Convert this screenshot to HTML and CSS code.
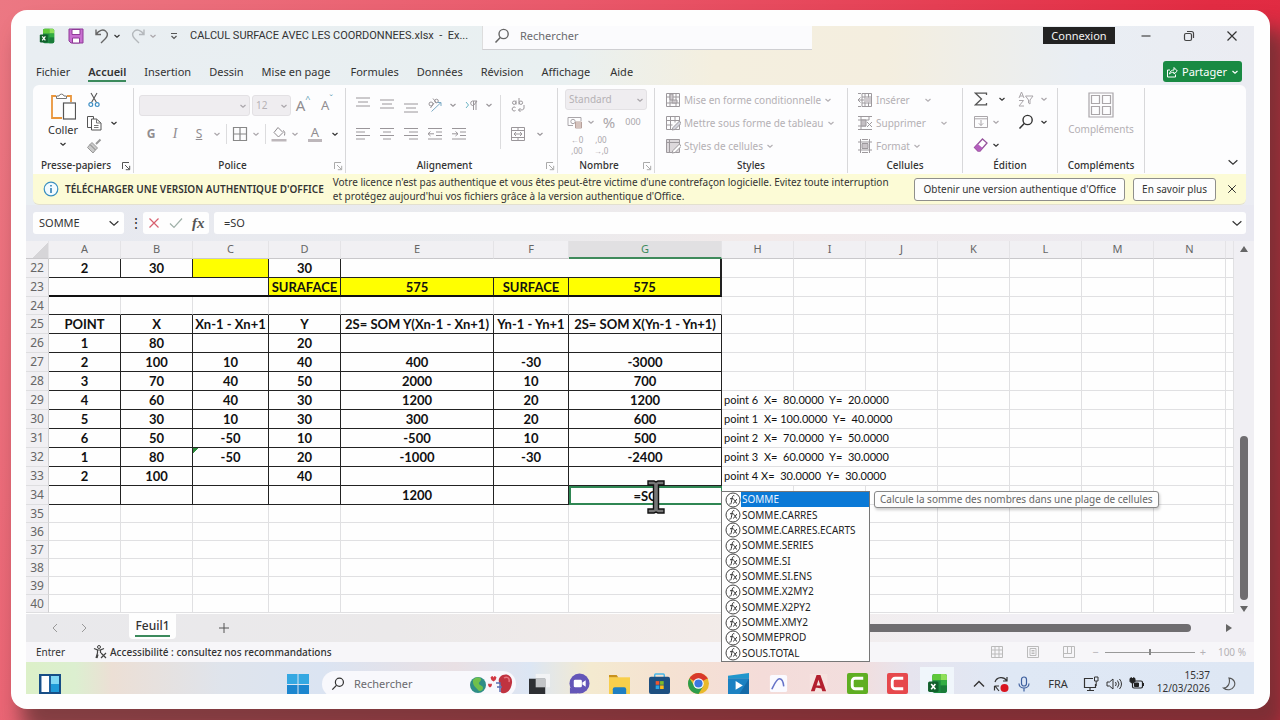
FILE: index.html
```html
<!DOCTYPE html>
<html lang="fr">
<head>
<meta charset="utf-8">
<title>CALCUL SURFACE AVEC LES COORDONNEES.xlsx</title>
<link rel="stylesheet" href="styles.css">
</head>
<body>
<svg class="sprite" aria-hidden="true">
  <symbol id="chev" viewBox="0 0 8 8"><path d="M1.5 3 4 5.3 6.5 3" fill="none" stroke="currentColor" stroke-width="1.2" vector-effect="non-scaling-stroke"/></symbol>
  <symbol id="search" viewBox="0 0 16 16"><circle cx="9.6" cy="6" r="4.6" fill="none" stroke="currentColor" stroke-width="1.4"/><path d="M6.2 9.6 1.5 14.4" stroke="currentColor" stroke-width="1.5"/></symbol>
  <symbol id="close" viewBox="0 0 12 12"><path d="M1.5 1.5l9 9M10.5 1.5l-9 9" stroke="currentColor" stroke-width="1.2"/></symbol>
  <symbol id="launch" viewBox="0 0 10 10"><path d="M1.5 8V1.5H8M4 4l4.5 4.5M8.7 4.8v3.9H4.8" fill="none" stroke="currentColor"/></symbol>
  <symbol id="excel" viewBox="0 0 20 20"><rect x="5" y="1" width="14" height="18" rx="2" fill="#1d8a41"/><path d="M7 1h6v6H5V3a2 2 0 0 1 2-2z" fill="#5fc83a"/><path d="M13 1h4a2 2 0 0 1 2 2v4h-6z" fill="#8fe05a"/><path d="M13 7h6v5h-6z" fill="#32ad43"/><path d="M13 12h6v5a2 2 0 0 1-2 2h-4z" fill="#197c38"/><rect x="1" y="8" width="10" height="10" rx="1.5" fill="#11602c"/><path d="M4 10.5l4 5M8 10.5l-4 5" stroke="#fff" stroke-width="1.5"/></symbol>
  <symbol id="paste" viewBox="0 0 26 28"><path d="M6 4H2v22h10M17 4h4v6" fill="none" stroke="#e9963c" stroke-width="1.8"/><path d="M6.5 6.5V4H9a2.6 2.6 0 0 1 5 0h2.500v2.500z" fill="#fff" stroke="#777"/><rect x="13.500" y="11" width="12" height="16" fill="#fff" stroke="#555" stroke-width="1.2"/></symbol>
  <symbol id="cut" viewBox="0 0 12 16"><path d="M3 1l5.500 9.500M9 1 3.500 10.500" stroke="#555" fill="none" stroke-width="1.1"/><circle cx="2.800" cy="12.600" r="1.900" fill="none" stroke="#3f8fc4" stroke-width="1.2"/><circle cx="9.200" cy="12.600" r="1.900" fill="none" stroke="#3f8fc4" stroke-width="1.2"/></symbol>
  <symbol id="copy" viewBox="0 0 16 16"><path d="M5 12.500H1.500v-11h6V4" fill="none" stroke="#555"/><path d="M5.500 4h5L15 8v7H5.500z" fill="#fff" stroke="#555"/><path d="M10.500 4v4H15M8 10.500h4.500M8 12.500h4.500" fill="none" stroke="#777"/></symbol>
  <symbol id="brush" viewBox="0 0 16 16"><path d="M14.500 1.500 10 6" stroke="#999" stroke-width="2"/><path d="M6 4.500 11.500 10 9.500 12 4 6.500zM4 6.500 1.500 9.500l5.500 5.500 2.500-3z" fill="#c9c9c9" stroke="#999"/></symbol>
  <symbol id="borders" viewBox="0 0 16 16"><path d="M1.500 1.500h13v13h-13zM8 1.500v13M1.500 8h13" fill="none" stroke="currentColor" stroke-width="1.200"/></symbol>
  <symbol id="bucket" viewBox="0 0 16 16"><path d="M7 1.500 12 6.500 7.500 11 3 6.500zM12 4.500c2 1 2 2 1.500 5" fill="none" stroke="#8d898d"/><path d="M.5 13h15v2.500H.5z" fill="#bdb7bb"/></symbol>
  <symbol id="al-top" viewBox="0 0 14 14"><path d="M0 2h14M2 6h10M0 10h14" stroke="currentColor"/></symbol>
  <symbol id="al-left" viewBox="0 0 14 14"><path d="M0 1.500h14M0 5h9M0 8.500h14M0 12h9" stroke="currentColor"/></symbol>
  <symbol id="al-center" viewBox="0 0 14 14"><path d="M0 1.500h14M3 5h8M0 8.500h14M3 12h8" stroke="currentColor"/></symbol>
  <symbol id="al-right" viewBox="0 0 14 14"><path d="M0 1.500h14M5 5h9M0 8.500h14M5 12h9" stroke="currentColor"/></symbol>
  <symbol id="outdent" viewBox="0 0 14 14"><path d="M0 1.500h14M8 5h6M8 8.500h6M0 12h14M0 6.800h6M2.500 4.500 0 6.800 2.500 9" fill="none" stroke="currentColor"/></symbol>
  <symbol id="indent" viewBox="0 0 14 14"><path d="M0 1.500h14M8 5h6M8 8.500h6M0 12h14M0 6.800h6M3.500 4.500 6 6.800 3.500 9" fill="none" stroke="currentColor"/></symbol>
  <symbol id="orient" viewBox="0 0 16 16"><circle cx="4" cy="7" r="2" fill="none" stroke="currentColor"/><path d="M3.500 11 7 6M6 1.500 9.500 6" stroke="currentColor"/><circle cx="9.500" cy="4" r="1.800" fill="none" stroke="currentColor"/><path d="M4.500 14.500 14 5.500M10.500 5.500H14V9" fill="none" stroke="#7aa9c4"/></symbol>
  <symbol id="para" viewBox="0 0 16 16"><path d="M3 5l2.500 3L3 11" fill="none" stroke="#6bb4c4"/><path d="M13 4v9M10.500 4v9M14 4h-4.500a2.300 2.300 0 0 0 0 4.500h1z" fill="none" stroke="currentColor"/></symbol>
  <symbol id="wrap" viewBox="0 0 16 16"><path d="M6 3.500v4M9 1v6.500M5.500 10.500A2 2 0 1 0 5.500 13.500M14 8v3c0 2-2 2-5.500 2M10.500 11l-2 2 2 2" fill="none" stroke="currentColor"/><circle cx="4.200" cy="5.700" r="1.700" fill="none" stroke="currentColor"/><circle cx="10.900" cy="5.700" r="1.700" fill="none" stroke="currentColor"/></symbol>
  <symbol id="merge" viewBox="0 0 16 16"><path d="M1.500 1.500h13v13h-13zM1.500 4.500h13M1.500 11.500h13M8 1.500v3M8 11.500v3M4 8h8M6 6 4 8l2 2M10 6l2 2-2 2" fill="none" stroke="currentColor"/></symbol>
  <symbol id="money" viewBox="0 0 16 16"><path d="M1 3.500h13V7M1 3.500v8h5" fill="none" stroke="currentColor"/><circle cx="6" cy="7.500" r="2.200" fill="none" stroke="currentColor"/><path d="M8.500 8h6v6h-6zM8.500 10h6M8.500 12h6" fill="#f4e5e0" stroke="#b7a19b"/></symbol>
  <symbol id="table1" viewBox="0 0 16 16"><path d="M1.500 1.500h13v13h-13zM1.500 5h13M1.500 11h13M5 1.500v13M11 1.500v13" fill="none" stroke="currentColor"/><path d="M5 2h3v6H5zM7 8h5v3H7z" fill="#cfcace" stroke="currentColor"/></symbol>
  <symbol id="table2" viewBox="0 0 16 16"><path d="M1.500 1.500h13v13h-13zM1.500 5.500h13M1.500 10h6M5.500 1.500v13M10 1.500v6" fill="none" stroke="currentColor"/><path d="M14.500 6 8 12.500l-1 2.500 3-.500L16 8.500z" fill="#d4d5de" stroke="currentColor"/></symbol>
  <symbol id="table3" viewBox="0 0 16 16"><path d="M1.500 1.500h13v13h-13zM1.500 4.500h13M4.500 1.500v13" fill="#ddd9dc" stroke="currentColor"/><path d="M14.500 6 8 12.500l-1 2.500 3-.500L16 8.500z" fill="#fff" stroke="currentColor"/></symbol>
  <symbol id="ins" viewBox="0 0 16 16"><path d="M5 1.500h9.500v13H5zM5 5h9.500M5 11h9.500M8 1.500v13M11.500 1.500v13M1 1.500h3M1 14.500h3" fill="none" stroke="currentColor"/><path d="M8 5.500h6v5H8z" fill="#cfcace"/><path d="M7 8H1M3.500 5.500 1 8l2.500 2.500" fill="none" stroke="currentColor"/></symbol>
  <symbol id="del" viewBox="0 0 16 16"><path d="M1 1.500h14M1 14.500h14M4 1.500V5h8V1.500M4 14.500V11h5M1 5h3M1 11h3" fill="none" stroke="currentColor"/><path d="M4 5h5v6H4z" fill="#c4bfc3" stroke="currentColor"/><path d="M10 7l5 5M15 7l-5 5" stroke="currentColor"/></symbol>
  <symbol id="fmt" viewBox="0 0 16 16"><path d="M1 4h14M1 12h14M3.500 1v14M12.500 1v14M5 1.500h6M5 14.500h6" fill="none" stroke="currentColor"/><path d="M5 5.500h6v5H5z" fill="#c9c4c8" stroke="currentColor"/></symbol>
  <symbol id="sigma" viewBox="0 0 14 14"><path d="M12.500 3V1.200H1.500L7.500 7l-6 5.800h11V11" fill="none" stroke="#555" stroke-width="1.300"/></symbol>
  <symbol id="fill" viewBox="0 0 16 16"><path d="M1.500 2.500h13v11h-13zM1.500 4.800h13M8 6v5.500M5.800 9.300 8 11.500l2.200-2.200" fill="none" stroke="currentColor"/></symbol>
  <symbol id="eraser" viewBox="0 0 16 16"><path d="M9.500 2 14 6 7 14H5L1.500 10.500z" fill="#fff" stroke="#96539c" stroke-width="1.300"/><path d="M4.800 6.900 9.600 11 7 14H5L1.500 10.500z" fill="#b55fbe"/></symbol>
  <symbol id="sort" viewBox="0 0 16 16"><path d="M1 7 3.500 1 6 7M2 5h3M1 9.500h4.500L1 15h5" fill="none" stroke="currentColor"/><path d="M7.500 5h7.500l-3 4v4l-1.500-1V9z" fill="none" stroke="currentColor"/></symbol>
  <symbol id="addins" viewBox="0 0 26 26"><path d="M1 1h24v24H1zM3.500 3.500h8v8h-8zM14.500 3.500h8v8h-8zM3.500 14.500h8v8h-8zM14.500 14.500h8v8h-8z" fill="none" stroke="#aaa6a9" stroke-width="1.200"/></symbol>
  <symbol id="fxc" viewBox="0 0 16 16"><circle cx="8" cy="8" r="7" fill="#fff" stroke="#444"/><path d="M9.300 3.800C7 2.800 7.300 6 6.300 10.500c-.300 1.700-1.300 2-2 1.500M5 6.700h3.500M8.500 7.500c2 0 1.500 4 3.500 3.700M12 7.300c-1.500.200-2 3.700-3.800 4" fill="none" stroke="#333"/></symbol>
  <symbol id="cam" viewBox="0 0 22 22"><rect width="22" height="22" rx="2" fill="currentColor"/><path d="M17 5.500H8.500a3 3 0 0 0-3 3v5a3 3 0 0 0 3 3H17" fill="none" stroke="#fff" stroke-width="3"/></symbol>
</svg>

<main class="frame">
<div class="app">
  <header class="titlebar">
    <div class="quick">
      <svg class="s16"><use href="#excel"/></svg>
      <button aria-label="Enregistrer"><svg class="s16" viewBox="0 0 16 16"><path d="M1 1h14v14H3l-2-2z" fill="#c86fd0" stroke="#8f3b98"/><path d="M4 1.500h8v5H4zM4.500 10h7v5h-7z" fill="#fff" stroke="#8f3b98"/></svg></button>
      <button aria-label="Annuler"><svg class="s16" viewBox="0 0 16 16"><path d="M2 1.500v5h5M2 6.500C5 2 9 1 11.500 3c3 2.500 2 5.500 0 7.500L7 15" fill="none" stroke="#666" stroke-width="1.400"/></svg><svg class="s8"><use href="#chev"/></svg></button>
      <button class="dim" aria-label="Rétablir"><svg class="s16" viewBox="0 0 16 16"><path d="M14 1.500v5H9M14 6.500C11 2 7 1 4.500 3c-3 2.500-2 5.500 0 7.500L9 15" fill="none" stroke="#b4b8bc" stroke-width="1.400"/></svg><svg class="s8"><use href="#chev"/></svg></button>
      <button aria-label="Personnaliser"><svg class="s8" viewBox="0 0 8 8"><path d="M1 1.500h6M1.500 4 4 6.500 6.500 4" fill="none" stroke="#555" stroke-width="1.200"/></svg></button>
    </div>
    <h1>CALCUL SURFACE AVEC LES COORDONNEES.xlsx&nbsp; -&nbsp; Ex...</h1>
    <label class="topsearch"><svg class="s16"><use href="#search"/></svg><input type="search" placeholder="Rechercher" aria-label="Rechercher"></label>
    <div class="wctl">
      <button class="connect">Connexion</button>
      <button aria-label="Réduire"><svg class="s12" viewBox="0 0 12 12"><path d="M1.500 6h9" stroke="#444" stroke-width="1.200"/></svg></button>
      <button aria-label="Restaurer"><svg class="s12" viewBox="0 0 12 12"><rect x="1.500" y="3.500" width="7" height="7" rx="1.500" fill="none" stroke="#444" stroke-width="1.200"/><path d="M4 1.500h4.500a2 2 0 0 1 2 2V8" fill="none" stroke="#444" stroke-width="1.200"/></svg></button>
      <button aria-label="Fermer"><svg class="s12"><use href="#close"/></svg></button>
    </div>
  </header>

  <nav class="tabs">
    <a href="#">Fichier</a><a href="#" class="on">Accueil</a><a href="#">Insertion</a><a href="#">Dessin</a><a href="#">Mise en page</a><a href="#">Formules</a><a href="#">Données</a><a href="#">Révision</a><a href="#">Affichage</a><a href="#">Aide</a>
    <button class="share"><svg class="s12" viewBox="0 0 12 12"><path d="M4 4H1.500v7h8V8.500M3.500 8C4 5 6 4 8 4V1.500L11.300 5 8 8V6.300C6 6.300 5 6.500 3.500 8z" fill="none" stroke="#fff"/></svg>Partager<svg class="s8"><use href="#chev"/></svg></button>
  </nav>

  <section class="ribbon">
    <div class="group g-clip">
      <div class="tools clip">
        <button class="paste"><svg width="26" height="28"><use href="#paste"/></svg>Coller<svg class="s8"><use href="#chev"/></svg></button>
        <div class="clipcol">
          <button aria-label="Couper"><svg width="12" height="16"><use href="#cut"/></svg></button>
          <button aria-label="Copier"><svg class="s16"><use href="#copy"/></svg><svg class="s8"><use href="#chev"/></svg></button>
          <button aria-label="Reproduire"><svg class="s16"><use href="#brush"/></svg></button>
        </div>
      </div>
      <footer class="launcher">Presse-papiers<svg class="s10"><use href="#launch"/></svg></footer>
    </div>
    <div class="group g-font dim">
      <div class="tools two">
        <div class="row">
          <label class="sel w-font"><select aria-label="Police" disabled><option></option></select><svg class="s8"><use href="#chev"/></svg></label>
          <label class="sel w-size"><select aria-label="Taille" disabled><option>12</option></select><svg class="s8"><use href="#chev"/></svg></label>
          <button class="b big">A<sup>^</sup></button><button class="b mid">A<sup>ˇ</sup></button>
        </div>
        <div class="row">
          <button class="b"><b>G</b></button><button class="b ital">I</button><button class="b"><u>S</u></button><button class="c"><svg class="s8"><use href="#chev"/></svg></button>
          <i class="sep"></i>
          <button class="b20"><svg class="s16 mid-grey"><use href="#borders"/></svg></button><button class="c"><svg class="s8"><use href="#chev"/></svg></button>
          <i class="sep"></i>
          <button class="b20"><svg class="s16"><use href="#bucket"/></svg></button><button class="c"><svg class="s8"><use href="#chev"/></svg></button>
          <button class="b fontcol"><span>A</span></button><button class="c dark"><svg class="s8"><use href="#chev"/></svg></button>
        </div>
      </div>
      <footer class="launcher">Police<svg class="s10"><use href="#launch"/></svg></footer>
    </div>
    <div class="group g-align dim">
      <div class="tools aligns">
        <div class="two">
          <div class="row">
            <button class="b"><svg class="s14 up"><use href="#al-top"/></svg></button><button class="b"><svg class="s14"><use href="#al-top"/></svg></button><button class="b low"><svg class="s14"><use href="#al-top"/></svg></button><button class="b"><svg class="s16"><use href="#orient"/></svg></button><button class="c"><svg class="s8"><use href="#chev"/></svg></button><button class="b"><svg class="s16"><use href="#para"/></svg></button><button class="c"><svg class="s8"><use href="#chev"/></svg></button>
          </div>
          <div class="row">
            <button class="b"><svg class="s14"><use href="#al-left"/></svg></button><button class="b"><svg class="s14"><use href="#al-center"/></svg></button><button class="b"><svg class="s14"><use href="#al-right"/></svg></button><button class="b"><svg class="s14"><use href="#outdent"/></svg></button><button class="b"><svg class="s14"><use href="#indent"/></svg></button>
          </div>
        </div>
        <i class="sep tall"></i>
        <div class="two">
          <div class="row"><button class="b"><svg class="s16"><use href="#wrap"/></svg></button></div>
          <div class="row"><button class="b"><svg class="s16"><use href="#merge"/></svg></button><button class="b20"><svg class="s8"><use href="#chev"/></svg></button></div>
        </div>
      </div>
      <footer class="launcher">Alignement<svg class="s10"><use href="#launch"/></svg></footer>
    </div>
    <div class="group g-num dim">
      <div class="tools three">
        <div class="row"><label class="sel w-num"><select aria-label="Format de nombre" disabled><option>Standard</option></select><svg class="s8"><use href="#chev"/></svg></label></div>
        <div class="row"><button class="b20"><svg class="s16"><use href="#money"/></svg></button><button class="c"><svg class="s8"><use href="#chev"/></svg></button><button class="b big">%</button><button class="b tiny">000</button></div>
        <div class="row"><button class="b dec"><span>←0</span><span>,00</span></button><button class="b dec"><span>,00</span><span>→,0</span></button></div>
      </div>
      <footer class="launcher">Nombre<svg class="s10"><use href="#launch"/></svg></footer>
    </div>
    <div class="group g-style dim">
      <div class="tools three">
        <button class="t"><svg class="s16"><use href="#table1"/></svg>Mise en forme conditionnelle<svg class="s8"><use href="#chev"/></svg></button>
        <button class="t"><svg class="s16"><use href="#table2"/></svg>Mettre sous forme de tableau<svg class="s8"><use href="#chev"/></svg></button>
        <button class="t"><svg class="s16"><use href="#table3"/></svg>Styles de cellules<svg class="s8"><use href="#chev"/></svg></button>
      </div>
      <footer>Styles</footer>
    </div>
    <div class="group g-cell dim">
      <div class="tools three">
        <button class="t split"><svg class="s16"><use href="#ins"/></svg>Insérer<svg class="s8"><use href="#chev"/></svg></button>
        <button class="t split"><svg class="s16"><use href="#del"/></svg>Supprimer<svg class="s8"><use href="#chev"/></svg></button>
        <button class="t"><svg class="s16"><use href="#fmt"/></svg>Format<svg class="s8"><use href="#chev"/></svg></button>
      </div>
      <footer>Cellules</footer>
    </div>
    <div class="group g-edit">
      <div class="tools three">
        <div class="row"><button class="b"><svg class="s14"><use href="#sigma"/></svg></button><button class="c first"><svg class="s8"><use href="#chev"/></svg></button><button class="b dim"><svg class="s16"><use href="#sort"/></svg></button><button class="c dim"><svg class="s8"><use href="#chev"/></svg></button></div>
        <div class="row"><button class="b dim"><svg class="s16"><use href="#fill"/></svg></button><button class="c second dim"><svg class="s8"><use href="#chev"/></svg></button><button class="b"><svg class="s16"><use href="#search"/></svg></button><button class="c"><svg class="s8"><use href="#chev"/></svg></button></div>
        <div class="row"><button class="b"><svg class="s16"><use href="#eraser"/></svg></button><button class="c second"><svg class="s8"><use href="#chev"/></svg></button></div>
      </div>
      <footer>Édition</footer>
    </div>
    <div class="group g-add dim">
      <div class="tools"><button class="addin"><svg width="26" height="26"><use href="#addins"/></svg>Compléments</button></div>
      <footer>Compléments</footer>
    </div>
    <button class="collapse" aria-label="Réduire le ruban"><svg class="s14" viewBox="0 0 8 8"><use href="#chev"/></svg></button>
  </section>

  <section class="notice">
    <svg class="s16" viewBox="0 0 16 16"><circle cx="8" cy="8" r="6.800" fill="#f2fbff" stroke="#3a8fc0" stroke-width="1.200"/><path d="M8 7v5M8 4v1.600" stroke="#2f7fb5" stroke-width="1.600"/></svg>
    <strong>TÉLÉCHARGER UNE VERSION AUTHENTIQUE D'OFFICE</strong>
    <p>Votre licence n'est pas authentique et vous êtes peut-être victime d'une contrefaçon logicielle. Evitez toute interruption<br>et protégez aujourd'hui vos fichiers grâce à la version authentique d'Office.</p>
    <button class="out">Obtenir une version authentique d'Office</button>
    <button class="out">En savoir plus</button>
    <button class="x" aria-label="Fermer"><svg class="s10" viewBox="0 0 12 12"><use href="#close"/></svg></button>
  </section>

  <section class="formula">
    <label class="namebox"><input value="SOMME" aria-label="Zone Nom"><svg class="s14" viewBox="0 0 8 8"><use href="#chev"/></svg></label>
    <span class="dots">⋮</span>
    <div class="fxbtns">
      <button aria-label="Annuler"><svg class="s12"><use href="#close" color="#d8606f"/></svg></button>
      <button aria-label="Entrer"><svg class="s14" viewBox="0 0 14 14"><path d="M1 7.500 5 11.500 13 2.500" fill="none" stroke="#9fb0a8" stroke-width="1.200"/></svg></button>
      <button class="fx" aria-label="Insérer une fonction">fx</button>
    </div>
    <label class="fbar"><input value="=SO" aria-label="Barre de formule"><svg class="s14" viewBox="0 0 8 8"><use href="#chev"/></svg></label>
  </section>

  <section class="sheet">
    <table>
      <colgroup><col class="k-h"><col class="k"><col class="k"><col class="k-c"><col class="k"><col class="k-e"><col class="k-f"><col class="k-g"><col class="k"><col class="k"><col class="k"><col class="k"><col class="k"><col class="k"><col class="k"><col></colgroup>
      <thead><tr><th class="corner"></th><th>A</th><th>B</th><th>C</th><th>D</th><th>E</th><th>F</th><th class="cur">G</th><th>H</th><th>I</th><th>J</th><th>K</th><th>L</th><th>M</th><th>N</th><th></th></tr></thead>
      <tbody>
        <tr class="d short"><th>22</th><td>2</td><td>30</td><td class="y"></td><td>30</td><td colspan="3" class="thick-r"></td><td></td><td></td><td></td><td></td><td></td><td></td><td></td><td></td></tr>
        <tr class="d short base"><th>23</th><td colspan="3"></td><td class="y">SURAFACE</td><td class="y">575</td><td class="y">SURFACE</td><td class="y thick-r">575</td><td></td><td></td><td></td><td></td><td></td><td></td><td></td><td></td></tr>
        <tr class="s above"><th>24</th><td></td><td></td><td></td><td></td><td></td><td></td><td></td><td></td><td></td><td></td><td></td><td></td><td></td><td></td><td></td></tr>
        <tr class="d"><th>25</th><td>POINT</td><td>X</td><td>Xn-1 - Xn+1</td><td>Y</td><td>2S= SOM Y(Xn-1 - Xn+1)</td><td>Yn-1 - Yn+1</td><td>2S= SOM X(Yn-1 - Yn+1)</td><td></td><td></td><td></td><td></td><td></td><td></td><td></td><td></td></tr>
        <tr class="d"><th>26</th><td>1</td><td>80</td><td></td><td>20</td><td></td><td></td><td></td><td></td><td></td><td></td><td></td><td></td><td></td><td></td><td></td></tr>
        <tr class="d"><th>27</th><td>2</td><td>100</td><td>10</td><td>40</td><td>400</td><td>-30</td><td>-3000</td><td></td><td></td><td></td><td></td><td></td><td></td><td></td><td></td></tr>
        <tr class="d"><th>28</th><td>3</td><td>70</td><td>40</td><td>50</td><td>2000</td><td>10</td><td>700</td><td></td><td></td><td></td><td></td><td></td><td></td><td></td><td></td></tr>
        <tr class="d"><th>29</th><td>4</td><td>60</td><td>40</td><td>30</td><td>1200</td><td>20</td><td>1200</td><td colspan="3" class="n">point 6  X=  80.0000  Y=  20.0000</td><td></td><td></td><td></td><td></td><td></td></tr>
        <tr class="d"><th>30</th><td>5</td><td>30</td><td>10</td><td>30</td><td>300</td><td>20</td><td>600</td><td colspan="3" class="n">point 1  X= 100.0000  Y=  40.0000</td><td></td><td></td><td></td><td></td><td></td></tr>
        <tr class="d"><th>31</th><td>6</td><td>50</td><td>-50</td><td>10</td><td>-500</td><td>10</td><td>500</td><td colspan="3" class="n">point 2  X=  70.0000  Y=  50.0000</td><td></td><td></td><td></td><td></td><td></td></tr>
        <tr class="d"><th>32</th><td>1</td><td>80</td><td class="flag">-50</td><td>20</td><td>-1000</td><td>-30</td><td>-2400</td><td colspan="3" class="n">point 3  X=  60.0000  Y=  30.0000</td><td></td><td></td><td></td><td></td><td></td></tr>
        <tr class="d"><th>33</th><td>2</td><td>100</td><td></td><td>40</td><td></td><td></td><td></td><td colspan="3" class="n">point 4 X=  30.0000  Y=  30.0000</td><td></td><td></td><td></td><td></td><td></td></tr>
        <tr class="d"><th>34</th><td></td><td></td><td></td><td></td><td>1200</td><td></td><td class="edit">=SO
          <svg class="ibeam" viewBox="0 0 18 34"><path d="M1 1h6l2 1 2-1h6v4h-5.500v24H17v4h-6l-2-1-2 1H1v-4h5.500V5H1z" fill="#777" stroke="#111" stroke-width="1.400"/></svg>
          <ul class="suggest">
            <li class="on"><svg class="s16"><use href="#fxc"/></svg><span>SOMME</span></li>
            <li><svg class="s16"><use href="#fxc"/></svg><span>SOMME.CARRES</span></li>
            <li><svg class="s16"><use href="#fxc"/></svg><span>SOMME.CARRES.ECARTS</span></li>
            <li><svg class="s16"><use href="#fxc"/></svg><span>SOMME.SERIES</span></li>
            <li><svg class="s16"><use href="#fxc"/></svg><span>SOMME.SI</span></li>
            <li><svg class="s16"><use href="#fxc"/></svg><span>SOMME.SI.ENS</span></li>
            <li><svg class="s16"><use href="#fxc"/></svg><span>SOMME.X2MY2</span></li>
            <li><svg class="s16"><use href="#fxc"/></svg><span>SOMME.X2PY2</span></li>
            <li><svg class="s16"><use href="#fxc"/></svg><span>SOMME.XMY2</span></li>
            <li><svg class="s16"><use href="#fxc"/></svg><span>SOMMEPROD</span></li>
            <li><svg class="s16"><use href="#fxc"/></svg><span>SOUS.TOTAL</span></li>
          </ul>
          <div class="tip" role="tooltip">Calcule la somme des nombres dans une plage de cellules</div>
        </td><td></td><td></td><td></td><td></td><td></td><td></td><td></td><td></td></tr>
        <tr class="s"><th>35</th><td></td><td></td><td></td><td></td><td></td><td></td><td></td><td></td><td></td><td></td><td></td><td></td><td></td><td></td><td></td></tr>
        <tr class="s"><th>36</th><td></td><td></td><td></td><td></td><td></td><td></td><td></td><td></td><td></td><td></td><td></td><td></td><td></td><td></td><td></td></tr>
        <tr class="s"><th>37</th><td></td><td></td><td></td><td></td><td></td><td></td><td></td><td></td><td></td><td></td><td></td><td></td><td></td><td></td><td></td></tr>
        <tr class="s"><th>38</th><td></td><td></td><td></td><td></td><td></td><td></td><td></td><td></td><td></td><td></td><td></td><td></td><td></td><td></td><td></td></tr>
        <tr class="s"><th>39</th><td></td><td></td><td></td><td></td><td></td><td></td><td></td><td></td><td></td><td></td><td></td><td></td><td></td><td></td><td></td></tr>
        <tr class="s"><th>40</th><td></td><td></td><td></td><td></td><td></td><td></td><td></td><td></td><td></td><td></td><td></td><td></td><td></td><td></td><td></td></tr>
      </tbody>
    </table>
    <div class="vscroll"><i class="tri up"></i><span></span><i class="tri down"></i></div>
  </section>

  <section class="sheettabs">
    <button class="nav" aria-label="Précédent"><svg class="s10" viewBox="0 0 10 10"><path d="M7 1 3 5l4 4" fill="none" stroke="#999"/></svg></button>
    <button class="nav" aria-label="Suivant"><svg class="s10" viewBox="0 0 10 10"><path d="M3 1l4 4-4 4" fill="none" stroke="#999"/></svg></button>
    <button class="tab"><span>Feuil1</span></button>
    <button class="plus" aria-label="Nouvelle feuille"><svg class="s10" viewBox="0 0 10 10"><path d="M5 0v10M0 5h10" stroke="#555"/></svg></button>
    <div class="hscroll"><span></span><i class="tri right"></i></div>
  </section>

  <section class="status">
    <span>Entrer</span>
    <svg class="s14" viewBox="0 0 14 14"><circle cx="6" cy="2" r="1.500" fill="none" stroke="#444"/><path d="M1 3.500 4.500 5v3L3 13M11 3.500 7.500 5v3M4.500 5h3M5 9.500 4 13" fill="none" stroke="#444" stroke-width="1.200"/><path d="M8 8l5 5M13 8l-5 5" stroke="#444" stroke-width="1.200"/></svg>
    <strong>Accessibilité : consultez nos recommandations</strong>
    <div class="views">
      <svg class="s12" viewBox="0 0 12 12"><path d="M.5.500h11v11H.5zM.5 4h11M.5 8h11M4 .500v11M8 .500v11" fill="none" stroke="#bbb"/></svg>
      <svg class="s12" viewBox="0 0 12 12"><path d="M.5.500h11v11H.5zM3 2.500h6v7H3zM4.500 4.500h3M4.500 6h3M4.500 7.500h3" fill="none" stroke="#bbb"/></svg>
      <svg class="s12" viewBox="0 0 12 12"><path d="M.5.500h11v11H.5zM.5 7.500h8v-7M4.500 .500v7" fill="none" stroke="#bbb"/></svg>
    </div>
    <span class="pale">−</span><input class="zoom" type="range" value="50" aria-label="Zoom"><span class="pale">+</span><span class="pale pct">100 %</span>
  </section>

  <footer class="taskbar">
    <svg class="widget" width="22" height="20" viewBox="0 0 22 20"><rect x="1" y="1" width="20" height="18" fill="#1f5f9c" stroke="#174e86" stroke-width="2"/><rect x="2.500" y="2" width="7.500" height="16" fill="#fff"/><rect x="12" y="2" width="8" height="16" fill="#1e9ad8"/><rect x="12" y="2" width="8" height="8" fill="#7fd8f4"/></svg>
    <svg class="win" width="22" height="22" viewBox="0 0 22 22"><path d="M0 1h10.500v10H0zM11.500 1H22v10H11.500z" fill="#35a8e2"/><path d="M0 12h10.500v10H0zM11.500 12H22v10H11.500z" fill="#1c86cf"/></svg>
    <label class="wsearch"><svg class="s14"><use href="#search"/></svg><input type="search" placeholder="Rechercher" aria-label="Recherche Windows">
      <svg width="44" height="22" viewBox="0 0 44 22"><circle cx="8" cy="12" r="8" fill="#2f8e86"/><path d="M3 7c3-4 7-3 8-1s-3 3-2 5 4 1 4 4-4 4-5 2-6-4-5-10z" fill="#6fc04c"/><path d="M30 4c5-5 13-2 12 6s-6 11-10 10c-3-1 0-5-1-7s-4-5-1-9z" fill="#c03340"/><path d="M34 5c3-2 6 0 5 4" fill="none" stroke="#e87680" stroke-width="1.500"/><path d="M26 10h4v9M27 14h5" fill="none" stroke="#5a6cae" stroke-width="1.500"/><path d="M20.500 4.500q2-3 3 0 1-3 3 0 0 2-3 4-3-2-3-4zM18 11.500q1-2 2 0 1-2 2 0 0 2-2 3-2-1-2-3z" fill="#d23842"/></svg>
    </label>
    <div class="apps">
      <span><svg viewBox="0 0 22 22"><rect x="7" y="1" width="15" height="14" fill="#f2f3f5"/><rect x="0" y="6" width="17" height="16" fill="#2d2f33"/><rect x="7" y="6" width="10" height="9" fill="#c2c4c7"/></svg></span>
      <span><svg viewBox="0 0 22 22"><circle cx="11" cy="11" r="10.500" fill="#6456b8"/><path d="M1 15v6.500h8z" fill="#6456b8"/><rect x="5" y="7" width="8.500" height="8" rx="1.500" fill="#fff"/><path d="M14 10l3.500-2.500v7L14 12z" fill="#fff"/></svg></span>
      <span><svg viewBox="0 0 22 22"><path d="M0 2h8l2 3H0z" fill="#c9921d"/><path d="M0 4.500h22V22H0z" fill="#f8cf4b"/><path d="M4 22v-5q0-2 2-2h10q2 0 2 2v5z" fill="#1f7fc1"/></svg></span>
      <span><svg viewBox="0 0 22 22"><path d="M6 5V2q0-1 1-1h8q1 0 1 1v3" fill="none" stroke="#46b6e8" stroke-width="1.500"/><rect x="0" y="4" width="22" height="18" rx="2" fill="#1d4f80"/><path d="M7 8.500h3.800v3.800H7z" fill="#f0562f"/><path d="M11.600 8.500h3.800v3.800h-3.800z" fill="#80bb28"/><path d="M7 13h3.800v3.800H7z" fill="#2aa6e6"/><path d="M11.600 13h3.800v3.800h-3.800z" fill="#fbbc18"/></svg></span>
      <span><svg viewBox="0 0 22 22"><circle cx="11" cy="11" r="11" fill="#e9b92b"/><path d="M11 11 1.500 5.500A11 11 0 0 1 20.500 5.500z" fill="#d8392c"/><path d="M1.500 5.500A11 11 0 0 0 11 22l5-8.500-10-1z" fill="#2c9c4b"/><path d="M11 5.500h9.500" stroke="#d8392c"/><circle cx="11" cy="11" r="5.500" fill="#fff"/><circle cx="11" cy="11" r="4.300" fill="#3b78e0"/></svg></span>
      <span><svg viewBox="0 0 22 22"><path d="M0 3 22 0v6H0z" fill="#2196cc"/><path d="M0 6h22v16H0z" fill="#146aa8"/><path d="M0 6h22L12 22H0z" fill="#1b81c2"/><path d="M8 8.500v9l7.500-4.500z" fill="#fff"/></svg></span>
      <span><svg viewBox="0 0 22 22"><rect x="2" y="2" width="18" height="18" rx="2" fill="#fafaff"/><path d="M4 17C7 11 9 6 12 6c3 0 4 3 4.500 8" fill="none" stroke="#6673c8" stroke-width="1.600"/></svg></span>
      <span><svg viewBox="0 0 22 22"><rect x="2" y="1" width="18" height="19" fill="#f6e3e0"/><path d="M3 19 9 2h4l6 17h-4l-4-12-4 12zM6 13h10v3.500L6 15z" fill="#b3202f"/></svg></span>
      <span class="green"><svg><use href="#cam"/></svg></span>
      <span class="red"><svg><use href="#cam"/></svg></span>
      <span class="active"><svg viewBox="0 0 20 20"><use href="#excel"/></svg></span>
    </div>
    <div class="tray">
      <svg class="s12" viewBox="0 0 12 12"><path d="M1 8.500 6 3.500l5 5" fill="none" stroke="#333" stroke-width="1.400"/></svg>
      <svg class="s16" viewBox="0 0 16 16"><path d="M2 6C4 .500 11 .500 13.500 4.500M14 1v4h-4M1.500 10v4.500M1.500 10H6M2 10l4 5" fill="none" stroke="#333" stroke-width="1.200"/><circle cx="11.500" cy="12" r="4" fill="#d8141f"/></svg>
      <svg class="s16" viewBox="0 0 16 16"><rect x="5.500" y="1" width="5" height="9" rx="2.500" fill="#dce6f6" stroke="#3d5f9e" stroke-width="1.200"/><path d="M3 7.500c0 6 10 6 10 0M8 12v3.500" fill="none" stroke="#3d5f9e" stroke-width="1.200"/></svg>
      <span class="lang">FRA</span>
      <svg class="s16" viewBox="0 0 16 16"><path d="M10 2.500H1.500v9h11V8M4 14.500h7M7 11.500v3" fill="none" stroke="#333" stroke-width="1.200"/><path d="M11.500 1h3.500v4h-3.500zM13.200 5v5" fill="none" stroke="#333"/></svg>
      <svg class="s16" viewBox="0 0 16 16"><path d="M1 6h2.500L7 3v10L3.500 10H1zM9.500 6q1.500 2 0 4M11.500 4.500q3 3.500 0 7M13.500 3q4 5 0 10" fill="none" stroke="#333"/></svg>
      <svg class="s16" viewBox="0 0 16 16"><rect x="3.500" y="5" width="10" height="7" rx="1.500" fill="none" stroke="#222" stroke-width="1.200"/><path d="M5.500 7h4v3.500h-4zM14.500 7v3" fill="#222" stroke="#222"/><path d="M1 2.500h5v3L4.500 7h-2L1 5.500zM2.200 1v2M4.800 1v2M3.500 7v3" fill="#222" stroke="#222"/></svg>
      <time>15:37<br>12/03/2026</time>
      <svg class="s14" viewBox="0 0 14 14"><path d="M7 1c5 .500 7 5 5 8.500S5 14 1.500 11C6 11 8.500 6 7 1z" fill="none" stroke="#555" stroke-width="1.100"/></svg>
    </div>
  </footer>
</div>
</main>
</body>
</html>
```

FILE: styles.css
```css
* { box-sizing: border-box; }
body {
  margin: 0;
  min-height: 100vh;
  display: flex;
  padding: 10px 10px 11px 11px;
  background: linear-gradient(115deg, #ec7883 0%, #e9596b 35%, #e22c43 75%, #dd2740 100%);
  font-family: "Noto Sans", "Open Sans", sans-serif;
  font-size: 11px;
  line-height: 14px;
  color: #333;
}
.sprite { position: absolute; width: 0; height: 0; }
svg { flex: none; display: block; }
.s8 { width: 8px; height: 8px; }
.s10 { width: 10px; height: 10px; }
.s12 { width: 12px; height: 12px; }
.s14 { width: 14px; height: 14px; }
.s16 { width: 16px; height: 16px; }
button, input, select { font: inherit; color: inherit; }
button {
  border: 0; padding: 0; background: none;
  display: flex; align-items: center; justify-content: center;
}
input { border: 0; background: none; padding: 0; min-width: 0; outline: 0; }
.dim { color: #aaa6aa; }

.frame {
  flex: 1;
  padding: 16px 16px 15px 15px;
  background: #fefefe;
  border-radius: 16px;
  box-shadow: 14px 22px 20px 4px rgba(95, 50, 50, .75);
}
.app {
  height: 100%;
  display: flex;
  flex-direction: column;
  background: linear-gradient(90deg, #e9eef2 0%, #e9f0f1 44%, #f4efdf 56%, #f4eedf 70%, #e9eef4 86%, #ebecf2 100%);
}

.titlebar { display: flex; height: 30px; align-items: flex-start; }
.quick { display: flex; align-items: center; height: 20px; padding-left: 13px; width: 164px; gap: 13px; }
.quick button { gap: 3px; }
.quick > button:nth-child(3) { margin-left: -3px; }
.quick > button:nth-child(4) { margin-left: -4px; }
.titlebar h1 { margin: 0; width: 292px; font-family: Roboto, sans-serif; font-size: 11px; font-weight: 400; line-height: 20px; white-space: nowrap; }
.topsearch {
  display: flex; align-items: center; gap: 10px; width: 330px; height: 24px; padding: 0 0 3px 11px;
  background: #fbfbfd; border-bottom: 1px solid #cfcfd2; border-left: 1px solid #ddd; color: #666;
}
.topsearch input::placeholder, .wsearch input::placeholder { color: #6a6a6e; opacity: 1; }
.wctl { margin-left: auto; display: flex; align-items: center; gap: 31px; padding: 1px 16px 0 0; }
.connect { background: #222; color: #f2f2f2; width: 72px; height: 17px; margin-right: -6px; }

.tabs { display: flex; align-items: center; height: 29px; padding: 4px 12px 0 10px; gap: 18px; }
.tabs a { color: inherit; text-decoration: none; line-height: 16px; padding-bottom: 0; border-bottom: 2px solid transparent; }
.tabs a.on { font-weight: 600; border-color: #3b8a5c; }
.tabs a:nth-child(5), .tabs a:nth-child(9) { padding-right: 2px; }
.share { margin: 0 0 2px auto; gap: 4px; width: 79px; height: 21px; border-radius: 3px; background: #198a43; color: #fff; }

.ribbon {
  display: flex; height: 89px; margin: 0 8px 0 7px; background: #fdfdfe; border-radius: 6px 6px 0 0;
  padding-top: 3px;
}
.group {
  display: flex; flex-direction: column; justify-content: space-between;
  border-right: 1px solid #d8d8da; height: 85px;
}
.group footer {
  position: relative; font-size: 10px; font-weight: 500; line-height: 14px; text-align: center; color: #333; padding-bottom: 1px;
}
.group .launcher { padding-right: 14px; }
.group footer svg { position: absolute; right: 2px; top: 3px; color: #555; }
.group.dim footer svg { color: #aaa; }
.g-clip { width: 101px; } .g-font { width: 212px; } .g-align { width: 212px; } .g-num { width: 97px; }
.g-style { width: 193px; } .g-cell { width: 115px; } .g-edit { width: 95px; } .g-add { width: 87px; }
.tools { height: 70px; }
.clip { display: flex; padding: 4px 0 0 15px; gap: 8px; }
.paste { flex-direction: column; justify-content: flex-start; width: 30px; }
.paste > svg:first-child { margin-bottom: 3px; }
.paste .s8 { margin-top: 3px; }
.clipcol { display: flex; flex-direction: column; justify-content: space-between; align-items: flex-start; height: 62px; }
.clipcol button { gap: 8px; }
.clipcol button:first-child { padding-left: 2px; }
.row { display: flex; align-items: center; height: 22px; }
.two { display: flex; flex-direction: column; gap: 7px; padding: 6px 0 0 5px; }
.three { display: flex; flex-direction: column; gap: 1px; padding-left: 7px; }
.b { width: 24px; height: 22px; font-size: 12px; }
.b20 { width: 20px; height: 22px; }
.c { width: 12px; height: 22px; }
.g-font .b { color: #918d91; }
.big { font-size: 15px; } .mid { font-size: 13px; } .tiny { font-size: 9px; }
.b sup { font-size: 9px; line-height: 9px; color: #5d9db5; align-self: flex-start; }
.ital { font-family: "Liberation Serif", serif; font-style: italic; font-size: 14px; }
.fontcol { width: 28px; font-size: 13px; }
.fontcol span { line-height: 13px; border-bottom: 3px solid #bdb7bb; padding: 0 3px; }
.g-font .dark { color: #333; }
.mid-grey { color: #888; }
.up { margin-bottom: 4px; }
.low { padding-top: 7px; }
.dec { flex-direction: column; font-size: 8px; line-height: 11px; }
.sep { width: 1px; height: 20px; background: #dcdcde; margin: 0 3px; }
.aligns { display: flex; color: #9a969a; }
.aligns .sep { height: 54px; margin: 7px 5px 0 5px; }
.aligns > .two:last-child { padding-left: 0; }
.sel { position: relative; display: block; }
.sel select { appearance: none; width: 100%; height: 21px; border: 1px solid #e3e1e4; border-radius: 3px; background: #efedf0; color: #b5b1b5; padding: 0 3px; opacity: 1; font-size: 10px; }
.sel svg { position: absolute; right: 3px; top: 7px; }
.w-font { width: 111px; margin-right: 2px; } .w-size { width: 39px; } .w-num { width: 82px; }
.t { align-self: flex-start; gap: 3px; height: 23px; color: #b4b0b4; white-space: nowrap; font-size: 10px; }
.t > svg:first-child { color: #9d999d; margin-left: 3px; }
.g-style .tools, .g-cell .tools { gap: 0; }
.g-cell .t > svg:first-child { margin-left: 2px; }
.split svg:last-child { margin-left: 11px; }
.g-edit .first { margin: 0 6px 0 3px; }
.g-edit .second { margin: 0 12px 0 -3px; }
.g-edit .three { padding-left: 6px; }
.addin { flex-direction: column; gap: 4px; width: 100%; padding-top: 4px; color: #b4b0b4; font-size: 10px; }
.collapse { margin: auto 6px 5px auto; }

.notice {
  display: flex; align-items: center; height: 31px; margin: 0 8px 0 7px; padding: 0 7px 0 10px;
  background: #fcfbd6; border-radius: 0 0 6px 6px; border-bottom: 1px solid #e3e0cf; white-space: nowrap; font-size: 10px; line-height: 14px;
}
.notice strong { font-size: 10px; font-weight: 600; margin: 0 9px 0 6px; }
.notice p { margin: 0 auto 0 0; }
.out { height: 23px; padding: 0 8px; border: 1px solid #8f8f8c; border-radius: 3px; background: #fdfdfd; margin-left: 8px; }
.x { width: 14px; margin-left: 9px; }

.formula { display: flex; align-items: center; gap: 5px; padding: 7px 8px 7px 7px; background: linear-gradient(90deg, #e7e9f0, #eaebee 40%, #f2eaea 60%, #e9e9f1); }
.namebox, .fxbtns, .fbar { display: flex; align-items: center; height: 22px; background: #fefefe; border-radius: 3px; }
.namebox { width: 91px; padding: 0 3px 0 6px; }
.namebox input { width: 68px; }
.dots { width: 9px; text-align: center; font-size: 14px; }
.fxbtns { width: 66px; justify-content: space-around; }
.fx { font: italic 700 15px "Liberation Serif", serif; color: #555; }
.fbar { flex: 1; padding: 0 2px 0 10px; }
.fbar input { flex: 1; }

.sheet { display: flex; background: #fefefe; height: 373px; }
table { flex: 1; width: 0; table-layout: fixed; border-spacing: 0; height: max-content; }
.k-h { width: 23px; } .k { width: 72px; } .k-c { width: 76px; } .k-e { width: 153px; } .k-f { width: 75px; } .k-g { width: 153px; }
th { padding: 0; font-size: 12px; line-height: 16px; font-weight: 400; color: #666; background: #f1f0f3; border-right: 1px solid #cfcfd1; border-bottom: 1px solid #dedee0; }
thead th { height: 18px; line-height: 15px; vertical-align: top; border-right-color: #e4e3e6; border-bottom-color: #c9c8cb; font-size: 11px; }
thead .cur { background: #e1e0e2; color: #3b8a5c; border-bottom: 2px solid #3f8a5b; }
.corner { background: linear-gradient(135deg, #f1f0f3 60%, #d6d5d8 60%); }
td { padding: 0; height: 18px; line-height: 16px; border-right: 1px solid #e0e0e2; border-bottom: 1px solid #e0e0e2; font-family: Lato, sans-serif; font-weight: 700; font-size: 13px; text-align: center; white-space: nowrap; color: #111; }
.d td { height: 19px; }
.d td:nth-child(-n+8) { border-color: #222; }
.short td:nth-child(n+7) { border-color: #e0e0e2; }
.d .thick-r { border-right: 2px solid #111; }
.base td:nth-child(-n+6) { border-bottom: 2px solid #111; }
.above td:nth-child(-n+8) { border-bottom-color: #222; }
td.y { background: #ff0; }
td.n { font-weight: 400; font-size: 11px; text-align: left; padding-left: 2px; white-space: pre; }
.flag { background: linear-gradient(135deg, #2c8a3c 4px, transparent 4px); }
.d td.edit { position: relative; border: 2px solid #2f8653; line-height: 14px; border-right-width: 1px; }
.ibeam { position: absolute; left: 76px; top: -8px; width: 18px; height: 34px; z-index: 2; }
.suggest {
  position: absolute; left: 100%; top: 3px; width: 149px; height: 171px; z-index: 3; margin: 0; padding: 0; list-style: none;
  display: grid; grid-auto-rows: 1fr; background: #fefefe; border: 1px solid #777;
  font: 400 10px/15px "Noto Sans", sans-serif; text-align: left; color: #222;
}
.suggest li { display: flex; align-items: center; padding-left: 3px; min-height: 0; }
.suggest svg { margin: -2px 0; }
.suggest span { flex: 1; padding-left: 1px; }
.suggest .on span { background: #0a79d6; color: #eaf4ff; }
.tip {
  position: absolute; left: 303px; top: 3px; z-index: 3; height: 17px; padding: 0 5px;
  background: #fdfdfd; border: 1px solid #888; border-radius: 3px; box-shadow: 1px 2px 3px #0003;
  font: 400 10px/14px "Noto Sans", sans-serif; color: #666;
}
.vscroll { display: flex; flex-direction: column; align-items: center; width: 20px; background: #f0eff3; padding: 5px 0 2px; }
.vscroll span { width: 8px; height: 164px; margin-top: auto; margin-bottom: 6px; background: #6f6d70; border-radius: 4px; }
.tri { border: 4px solid transparent; }
.tri.up { border-bottom: 6px solid #666; border-top: 0; }
.tri.down { border-top: 6px solid #666; border-bottom: 0; }
.tri.right { border-left: 6px solid #666; border-right: 0; }

.sheettabs { display: flex; align-items: center; height: 28px; background: linear-gradient(90deg, #e9e9ec, #ebe9ea 30%, #f2ebe8 55%, #f1eff4 80%); }
.nav { width: 29px; }
.nav:first-child { margin-left: 14px; }
.tab { width: 47px; height: 25px; margin: 0 0 3px 31px; background: #fefefe; border-radius: 0 0 4px 4px; font-weight: 500; font-size: 12px; }
.tab span { border-bottom: 2px solid #3b8a5c; line-height: 18px; }
.plus { margin-left: 43px; }
.hscroll { display: flex; align-items: center; margin-left: auto; width: 420px; gap: 35px; padding-right: 22px; }
.hscroll span { flex: 1; height: 8px; border-radius: 4px; background: #6f6d70; }

.status { display: flex; align-items: center; height: 20px; padding: 0 8px 0 10px; background: #f7f6f9; font-size: 10px; }
.status > svg { margin: 0 3px 0 28px; }
.status strong { font-weight: 500; }
.views { display: flex; gap: 24px; margin: 0 17px 0 auto; }
.pale { color: #b5b2b6; font-size: 11px; }
.pct { margin-left: 12px; font-size: 10px; }
.zoom { appearance: none; width: 90px; height: 12px; margin: 0 5px 0 6px; background: linear-gradient(#999, #999) center / 100% 1px no-repeat; }
.zoom::-webkit-slider-thumb { appearance: none; width: 2px; height: 6px; background: #888; }

.taskbar {
  display: flex; align-items: center; height: 32px; padding: 12px 18px 0 13px; overflow: hidden;
  background: linear-gradient(90deg, #dcf0c8 0%, #dcefd0 4%, #ecdfd5 7%, #dfe4ec 16%, #dbe4f2 24%, #e9e0e4 35%, #dce6f4 41%, #f4ead0 46%, #f5e2d2 52%, #f4dcd9 60%, #f2dede 68%, #e6e4ee 72%, #dfe8f5 80%, #dee7f4 100%);
}
.taskbar > * { margin-bottom: 1px; }
.win { margin-left: 226px; }
.wsearch { display: flex; align-items: center; gap: 9px; height: 26px; width: 194px; margin-left: 13px; padding: 0 2px 0 9px; border-radius: 13px; background: #f8f8fc; color: #333; }
.wsearch input { flex: 1; }
.apps { display: flex; width: 437px; margin-left: 4px; }
.apps span { flex: 1; display: flex; justify-content: center; }
.apps svg { width: 21px; height: 21px; }
.green { color: #5fae22; } .red { color: #e6484c; }
.apps .active { background: linear-gradient(#f0f6fb, #f0f6fb) center / 34px 100% no-repeat; margin: -6px 0; padding: 6px 0; }
.tray { display: flex; align-items: center; margin-left: auto; gap: 8px; font-size: 10px; }
.lang { margin: 0 7px 0 8px; font-size: 11px; }
.tray .s16 + .s16 { margin-left: -1px; }
time { text-align: right; margin: -4px 4px 0 4px; line-height: 13px; }
```
